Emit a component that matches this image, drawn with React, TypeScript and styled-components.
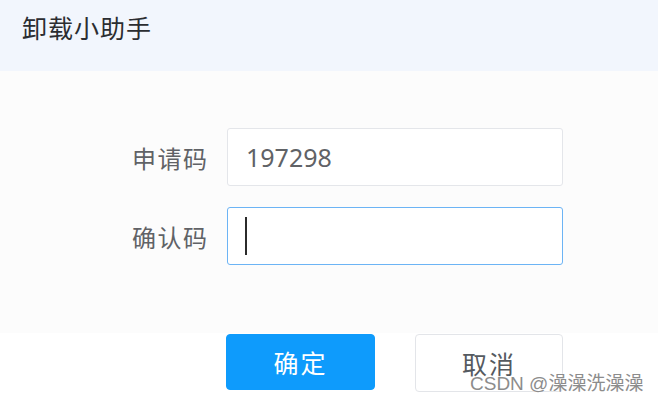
import React from 'react';
import styled, {createGlobalStyle} from 'styled-components';

const GlobalStyle = createGlobalStyle`
    html, body {
        margin: 0;
        padding: 0;
        background: #ffffff;
    }
    body {
        font-family: "Microsoft YaHei", "Noto Sans CJK SC", "Noto Sans", sans-serif;
    }
`;

const Dialog = styled.div`
    position: relative;
    width: 658px;
    height: 402px;
    display: flex;
    flex-direction: column;
    overflow: hidden;
    background: #ffffff;
`;

const Header = styled.header`
    height: 71px;
    box-sizing: border-box;
    padding: 10px 22px 0;
    background: #f2f6fd;
    & h1 {
        margin: 0;
        font-size: 25px;
        line-height: 34px;
        font-weight: normal;
        letter-spacing: 1px;
        color: #2b2d31;
    }
`;

const Body = styled.section`
    height: 262px;
    box-sizing: border-box;
    padding: 57px 0 0 107px;
    background: #fcfcfc;
`;

const Form = styled.div`
    display: grid;
    grid-template-columns: 100px 336px;
    column-gap: 20px;
    row-gap: 21px;
    align-items: center;
`;

const Label = styled.label`
    text-align: right;
    font-size: 24px;
    color: #606266;
    letter-spacing: 1.5px;
    margin-right: -1.5px;
`;

const Field = styled.div<{$focused?: boolean}>`
    height: 58px;
    box-sizing: border-box;
    display: flex;
    align-items: center;
    padding-left: 18px;
    border: 1px solid ${p => (p.$focused ? '#6cb4f5' : '#e4e6ea')};
    border-radius: 3px;
    background: #ffffff;
    font-family: "Noto Sans", "Noto Sans CJK SC", sans-serif;
    font-size: 25px;
    color: #606266;
`;

const Caret = styled.span`
    display: block;
    width: 2px;
    height: 38px;
    margin-left: -1px;
    background: #2b2b2b;
`;

const Footer = styled.footer`
    flex: 1;
    display: flex;
    gap: 40px;
    padding: 1px 0 0 226px;
    background: #ffffff;
`;

const Button = styled.button<{$primary?: boolean}>`
    width: ${p => (p.$primary ? '149px' : '148px')};
    height: ${p => (p.$primary ? '56px' : '58px')};
    margin: 0;
    padding: 0;
    border: 1px solid ${p => (p.$primary ? '#0e9bfc' : '#e3e5e9')};
    border-radius: 4px;
    background: ${p => (p.$primary ? '#0e9bfc' : '#ffffff')};
    color: ${p => (p.$primary ? '#ffffff' : '#555a60')};
    font-family: "Microsoft YaHei", "Noto Sans CJK SC", sans-serif;
    font-size: 25px;
    letter-spacing: 2px;
    cursor: pointer;
`;

const Watermark = styled.span`
    position: absolute;
    left: 470px;
    top: 371px;
    font-family: "Liberation Sans", "Noto Sans CJK SC", sans-serif;
    font-size: 19px;
    line-height: 26px;
    color: #8c8c8c;
    text-shadow: 0 0 2px #ffffff, 0 0 1px #ffffff;
    white-space: nowrap;
`;

export default function App() {
    return (
        <Dialog>
            <GlobalStyle/>
            <Header>
                <h1>卸载小助手</h1>
            </Header>
            <Body>
                <Form>
                    <Label>申请码</Label>
                    <Field>197298</Field>
                    <Label>确认码</Label>
                    <Field $focused>
                        <Caret/>
                    </Field>
                </Form>
            </Body>
            <Footer>
                <Button $primary>确定</Button>
                <Button>取消</Button>
            </Footer>
            <Watermark>CSDN @澡澡洗澡澡</Watermark>
        </Dialog>
    );
}
